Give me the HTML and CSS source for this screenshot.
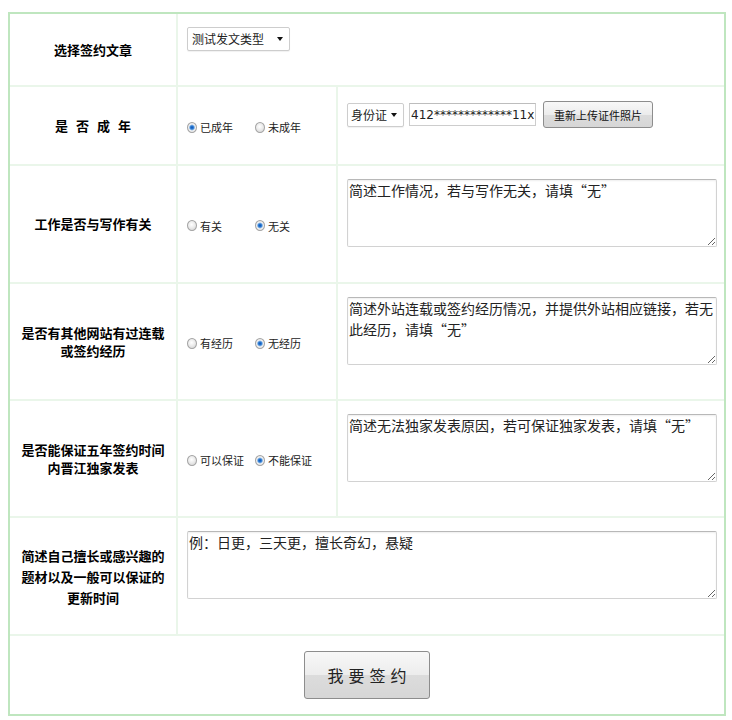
FILE: index.html
```html
<!DOCTYPE html>
<html lang="zh-CN">
<head>
<meta charset="utf-8">
<title>签约申请</title>
<link rel="stylesheet" href="styles.css">
</head>
<body>
<div class="page">
  <div class="frame">
    <table class="sign">
      <colgroup><col class="c1"><col class="c2"><col class="c3"></colgroup>
      <tr class="r1">
        <th>选择签约文章</th>
        <td colspan="2">
          <div class="select article"><span>测试发文类型</span><i class="arrow"></i></div>
        </td>
      </tr>
      <tr class="r2">
        <th class="spaced">是 否 成 年</th>
        <td class="opts">
          <label class="opt"><input type="radio" name="adult" checked><span>已成年</span></label><label class="opt"><input type="radio" name="adult"><span>未成年</span></label>
        </td>
        <td>
          <div class="id-line">
            <div class="select idtype"><span>身份证</span><i class="arrow"></i></div>
            <input class="idnum" type="text" value="412*************11x">
            <button class="btn upload" type="button">重新上传证件照片</button>
          </div>
        </td>
      </tr>
      <tr class="r3">
        <th>工作是否与写作有关</th>
        <td class="opts">
          <label class="opt"><input type="radio" name="work"><span>有关</span></label><label class="opt"><input type="radio" name="work" checked><span>无关</span></label>
        </td>
        <td><textarea class="memo">简述工作情况，若与写作无关，请填“无”</textarea></td>
      </tr>
      <tr class="r4">
        <th>是否有其他网站有过连载<br>或签约经历</th>
        <td class="opts">
          <label class="opt"><input type="radio" name="other"><span>有经历</span></label><label class="opt"><input type="radio" name="other" checked><span>无经历</span></label>
        </td>
        <td><textarea class="memo">简述外站连载或签约经历情况，并提供外站相应链接，若无此经历，请填“无”</textarea></td>
      </tr>
      <tr class="r5">
        <th>是否能保证五年签约时间<br>内晋江独家发表</th>
        <td class="opts">
          <label class="opt"><input type="radio" name="excl"><span>可以保证</span></label><label class="opt"><input type="radio" name="excl" checked><span>不能保证</span></label>
        </td>
        <td><textarea class="memo">简述无法独家发表原因，若可保证独家发表，请填“无”</textarea></td>
      </tr>
      <tr class="r6">
        <th class="tall">简述自己擅长或感兴趣的<br>题材以及一般可以保证的<br>更新时间</th>
        <td colspan="2"><textarea class="memo wide">例：日更，三天更，擅长奇幻，悬疑</textarea></td>
      </tr>
      <tr class="r7">
        <td colspan="3" class="submit-cell"><button class="btn submit" type="submit">我要签约</button></td>
      </tr>
    </table>
  </div>
</div>
</body>
</html>
```
FILE: styles.css
```css
* { box-sizing: border-box; }

body {
  margin: 0;
  background: #fff;
  font-family: "Noto Sans CJK SC", "Liberation Sans", sans-serif;
  color: #222;
}

.page { padding: 12px 6px 0 8px; }

.frame {
  width: 718px;
  border: 2px solid #bfe6bf;
}

.sign {
  width: 100%;
  border-collapse: collapse;
  table-layout: fixed;
}

.c1 { width: 167px; }
.c2 { width: 160px; }
.c3 { width: 387px; }

.sign th,
.sign td {
  border: 2px solid #eaf6ea;
}

.sign tr:first-child > * { border-top: 0; }
.sign tr:last-child > * { border-bottom: 0; }
.sign tr > *:first-child { border-left: 0; }
.sign tr > *:last-child { border-right: 0; }

.sign td {
  padding: 13px 8px 0 9px;
  vertical-align: top;
}

.sign .r1 td { padding-top: 11px; }

.sign th {
  padding: 0 4px;
  font-size: 13px;
  line-height: 18px;
  font-weight: bold;
  color: #000;
  text-align: center;
  vertical-align: middle;
}

.sign th.spaced { word-spacing: 5px; }
.sign th.tall { line-height: 21px; }

.r1 { height: 72px; }
.r2 { height: 79px; }
.r3 { height: 118px; }
.r4 { height: 117px; }
.r5 { height: 117px; }
.r6 { height: 118px; }
.r7 { height: 79px; }

/* select boxes */
.select {
  display: inline-flex;
  align-items: center;
  justify-content: space-between;
  height: 24px;
  padding: 0 6px 0 4px;
  border: 1px solid #cdcdcd;
  border-radius: 2px;
  background: #fff;
  box-shadow: 0 1px 1px rgba(0, 0, 0, 0.06);
  font-size: 12px;
  color: #222;
}

.select.article { width: 103px; }
.select.idtype { width: 57px; padding-left: 3px; }

.arrow {
  width: 0;
  height: 0;
  border-left: 3.5px solid transparent;
  border-right: 3.5px solid transparent;
  border-top: 4px solid #111;
}

/* id line */
.id-line {
  display: flex;
  align-items: center;
  height: 27px;
  margin-top: 1px;
}

.idnum {
  width: 127px;
  height: 23px;
  margin: 0 7px 0 5px;
  padding: 0 1px;
  border: 1px solid #cdcdcd;
  border-top-color: #bdbdbd;
  font-family: "DejaVu Sans", sans-serif;
  font-size: 12px;
  color: #222;
  outline: none;
}

/* buttons */
.btn {
  border: 1px solid #8d8d8d;
  border-radius: 3px;
  background: linear-gradient(#f8f8f8, #ececec 50%, #dcdcdc 51%, #d6d6d6);
  color: #111;
  font-family: "Noto Sans CJK SC", sans-serif;
  cursor: pointer;
  padding: 0;
}

.btn.upload {
  width: 110px;
  height: 27px;
  font-size: 11px;
}

.btn.submit {
  width: 126px;
  height: 48px;
  font-size: 16px;
  letter-spacing: 5px;
  padding-left: 5px;
  color: #222;
}

.sign td.submit-cell {
  text-align: center;
  vertical-align: middle;
  padding: 0;
}

/* radio options */
.sign td.opts {
  vertical-align: middle;
  padding-top: 0;
  white-space: nowrap;
}

.opt {
  display: inline-flex;
  align-items: center;
  width: 68px;
  font-size: 11px;
  color: #222;
}

.opt input {
  appearance: none;
  -webkit-appearance: none;
  flex: none;
  width: 10px;
  height: 11px;
  margin: 0 3px 0 0;
  border: 1px solid #a4a4a4;
  border-radius: 50%;
  background: radial-gradient(circle at 45% 40%, #ffffff 0, #ececec 45%, #cfcfcf 100%);
}

.opt input:checked {
  background: radial-gradient(circle at 50% 50%, #0d4fb0 0, #2f7fd6 28%, #86b3e3 40%, #f2f2f2 55%, #d4d4d4 100%);
}

/* textareas */
.memo {
  display: block;
  width: 370px;
  height: 68px;
  margin: 0;
  padding: 0 1px;
  border: 1px solid #d2d2d2;
  border-top-color: #b8b8b8;
  border-radius: 2px;
  box-shadow: inset 0 1px 2px rgba(0, 0, 0, 0.07);
  font-family: "Noto Sans CJK SC", sans-serif;
  font-size: 14px;
  line-height: 21px;
  color: #222;
  resize: both;
  outline: none;
}

.memo.wide { width: 530px; }
```
